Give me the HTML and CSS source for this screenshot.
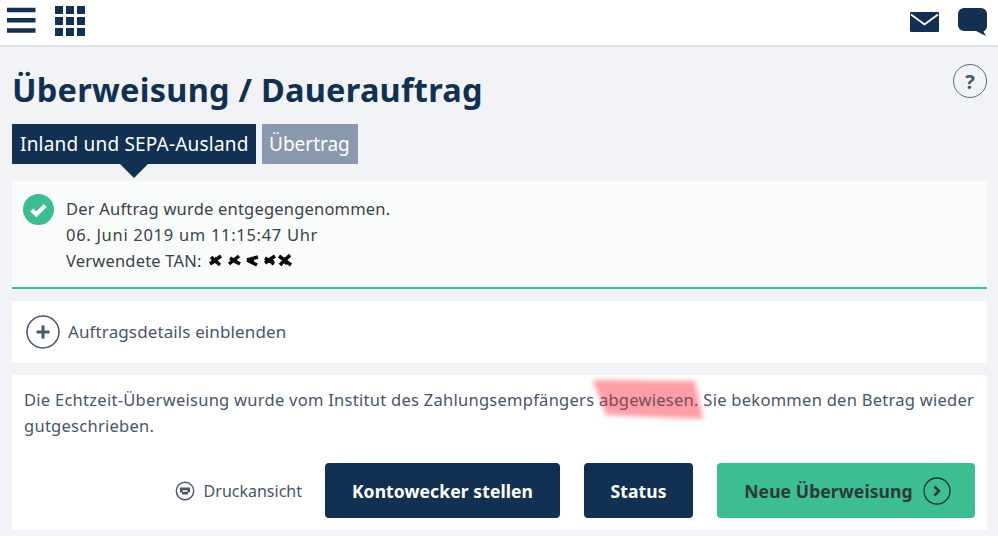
FILE: index.html
```html
<!DOCTYPE html>
<html lang="de">
<head>
<meta charset="utf-8">
<title>Überweisung / Dauerauftrag</title>
<link rel="stylesheet" href="styles.css">
</head>
<body>
<header class="topbar">
  <div class="topbar-left">
    <svg class="icon-menu" viewBox="0 0 29 26"><path d="M0 3h28.500M0 13.300h28.500M0 23.500h28.500"/></svg>
    <svg class="icon-grid" viewBox="0 0 30 30"><rect x="0" y="0" width="8" height="8"/><rect x="11" y="0" width="8" height="8"/><rect x="22" y="0" width="8" height="8"/><rect x="0" y="11" width="8" height="8"/><rect x="11" y="11" width="8" height="8"/><rect x="22" y="11" width="8" height="8"/><rect x="0" y="22" width="8" height="8"/><rect x="11" y="22" width="8" height="8"/><rect x="22" y="22" width="8" height="8"/></svg>
  </div>
  <div class="topbar-right">
    <svg class="icon-mail" viewBox="0 0 29 20"><path class="fill" d="M1 0h27a1 1 0 0 1 1 1v18a1 1 0 0 1-1 1H1a1 1 0 0 1-1-1V1a1 1 0 0 1 1-1z"/><path class="flap" d="M1 2.500l13.500 10 13.500-10"/></svg>
    <svg class="icon-chat" viewBox="0 0 31 28"><path class="fill" d="M7 0h17a6 6 0 0 1 6 6v12a6 6 0 0 1-3.500 5.400l2.500 4.600-10-5H7a6 6 0 0 1-6-6V6a6 6 0 0 1 6-6z"/></svg>
  </div>
</header>
<main class="page">
  <div class="title-row">
    <h1>Überweisung / Dauerauftrag</h1>
    <span class="help">?</span>
  </div>
  <nav class="tabs">
    <a class="tab tab-active">Inland und SEPA-Ausland</a>
    <a class="tab tab-muted">Übertrag</a>
  </nav>
  <section class="card card-success">
    <svg class="icon-check" viewBox="0 0 30 30"><circle cx="15" cy="15" r="15"/><path d="M8.500 15.500l4.500 4.300 8.500-8.600"/></svg>
    <div class="success-text">
      <p>Der Auftrag wurde entgegengenommen.</p>
      <p class="date-line">06. Juni 2019 um 11:15:47 Uhr</p>
      <p class="tan-line">Verwendete TAN:
        <svg class="scribble" viewBox="0 0 84 14"><path d="M2 11l11-8M3 4l9 8M4 6l6 4M9 5l-5 5M22 5l10 6M31 3l-10 8M24 7l6 3M39 7l11-3M39 7l10 5M41 7l5 1M57 10l10-7M57 5l9 6M60 8l6 1M72 12l10-10M71 3l12 9M75 5l4 6"/></svg>
      </p>
    </div>
  </section>
  <section class="card card-toggle">
    <svg class="icon-plus" viewBox="0 0 34 34"><circle cx="17" cy="17" r="16"/><path d="M10.500 17h13M17 10.500v13"/></svg>
    <span>Auftragsdetails einblenden</span>
  </section>
  <section class="card card-result">
    <p class="result-text">Die Echtzeit-Überweisung wurde vom Institut des Zahlungsempfängers <mark class="marker"><span class="marker-ink"></span>abgewiesen.</mark> Sie bekommen den Betrag wieder gutgeschrieben.</p>
    <div class="actions">
      <a class="print">
        <svg class="icon-print" viewBox="0 0 20 20"><circle cx="10" cy="10" r="8.700"/><path class="print-body" d="M5 6.500h10v5h-2v2H7v-2H5z"/><path class="print-slot" d="M7.500 10h5"/></svg>
        Druckansicht
      </a>
      <a class="btn btn-wide">Kontowecker stellen</a>
      <a class="btn btn-status">Status</a>
      <a class="btn btn-green">Neue Überweisung
        <svg class="icon-next" viewBox="0 0 28 28"><circle cx="14" cy="14" r="13"/><path d="M11.500 9.500l4.500 4.500-4.500 4.500"/></svg>
      </a>
    </div>
  </section>
</main>
</body>
</html>
```
FILE: styles.css
```css
* { box-sizing: border-box; }
html, body { margin: 0; padding: 0; }
body {
  width: 998px;
  height: 536px;
  overflow: hidden;
  background: #f1f3f6;
  font-family: "Noto Sans", "Open Sans", sans-serif;
  color: #47566a;
}
p { margin: 0; }

.topbar {
  height: 47px;
  background: #fff;
  border-bottom: 2px solid #dfe2ea;
  display: flex;
  justify-content: space-between;
  padding: 5px 10px 0 7px;
}
.topbar-left { display: flex; gap: 19px; align-items: flex-start; }
.topbar-right { display: flex; gap: 18px; align-items: flex-start; padding-top: 3px; }
.icon-menu { width: 29px; height: 26px; margin-top: 2px; }
.icon-menu path { stroke: #123152; stroke-width: 4.500; fill: none; }
.icon-grid { width: 30px; height: 30px; margin-top: 1px; }
.icon-grid rect { fill: #123152; }
.icon-mail { width: 29px; height: 20px; margin-top: 4px; }
.icon-chat { width: 31px; height: 28px; }
.fill { fill: #123152; }
.flap { fill: none; stroke: #fff; stroke-width: 1.800; }

.page { padding: 0 11px 0 12px; }
.title-row { display: flex; justify-content: space-between; height: 77px; padding-top: 18px; }
h1 {
  margin: 0;
  font-size: 32.500px;
  line-height: 50px;
  font-weight: 700;
  color: #123152;
  letter-spacing: 0.25px;
}
.help {
  width: 34px;
  height: 34px;
  margin: -1px 0 0 0;
  border: 1.500px solid #5d6c80;
  border-radius: 50%;
  display: flex;
  align-items: center;
  justify-content: center;
  font-size: 20px;
  font-weight: 700;
  color: #47566a;
}

.tabs { display: flex; gap: 6px; height: 40px; }
.tab {
  height: 40px;
  font-size: 19px;
  line-height: 40px;
  color: #fff;
  letter-spacing: 0.2px;
}
.tab-active { position: relative; width: 244px; padding-left: 8px; background: #123152; }
.tab-active::after {
  content: "";
  position: absolute;
  left: 108px;
  top: 40px;
  border: 14px solid transparent;
  border-top-color: #123152;
  border-bottom: 0;
}
.tab-muted { width: 96px; padding-left: 7px; background: #8a99ad; letter-spacing: 0; }

.card { background: #fff; }
.card-success {
  margin-top: 17px;
  height: 108px;
  padding: 13px 0 0 11px;
  display: flex;
  gap: 12px;
  background: #fafcfc;
  border-bottom: 2px solid #3dbd92;
}
.icon-check { width: 31px; height: 31px; flex: none; }
.icon-check circle { fill: #3dbd92; }
.icon-check path { fill: none; stroke: #fff; stroke-width: 4; }
.success-text { font-size: 16.500px; line-height: 26px; color: #3b4249; padding-top: 2px; letter-spacing: 0.2px; }
.date-line { letter-spacing: 0.7px; }
.tan-line { display: flex; align-items: center; gap: 6px; }
.scribble { width: 84px; height: 14px; margin-top: -3px; }
.scribble path { fill: none; stroke: #0b0b0b; stroke-width: 3.500; }

.card-toggle {
  margin-top: 12px;
  height: 62px;
  padding: 0 0 2px 14px;
  display: flex;
  align-items: center;
  gap: 8px;
  font-size: 17px;
  letter-spacing: 0.12px;
}
.icon-plus { width: 34px; height: 34px; margin-top: 2px; }
.icon-plus circle { fill: none; stroke: #47566a; stroke-width: 1.500; }
.icon-plus path { fill: none; stroke: #47566a; stroke-width: 3; }

.card-result { position: relative; z-index: 0; margin-top: 12px; height: 155px; padding: 12px 12px 0; }
.result-text { font-size: 16.500px; line-height: 26px; letter-spacing: 0.27px; }
.marker {
  position: relative;
  background: none;
  color: #7d4b5f;
}
.marker-ink {
  position: absolute;
  left: -8px;
  top: -10px;
  width: 115px;
  height: 44px;
  filter: blur(2.500px);
  z-index: -1;
}
.marker-ink::before {
  content: "";
  position: absolute;
  inset: 0;
  background: #fd9da5;
  clip-path: polygon(2px 2px, 104px 3px, 112px 41px, 15px 37px);
}
.actions {
  display: flex;
  align-items: center;
  justify-content: flex-end;
  margin-top: 24px;
  font-size: 16px;
}
.print { display: flex; align-items: center; gap: 9px; margin-right: 23px; }
.icon-print { width: 20px; height: 20px; }
.icon-print circle { fill: none; stroke: #47566a; stroke-width: 1.400; }
.print-body { fill: #47566a; }
.print-slot { stroke: #fff; stroke-width: 1.500; }
.btn {
  flex: none;
  height: 55px;
  border-radius: 4px;
  display: flex;
  align-items: center;
  justify-content: center;
  font-size: 17.500px;
  font-weight: 700;
  color: #fff;
  background: #123152;
  letter-spacing: 0.1px;
}
.btn-wide { width: 235px; }
.btn-status { width: 109px; margin-left: 24px; }
.btn-green {
  width: 258px;
  margin-left: 24px;
  padding-left: 3px;
  gap: 10px;
  background: #3dbd92;
  color: #2a3a3a;
}
.icon-next { width: 28px; height: 28px; }
.icon-next circle { fill: none; stroke: #22333a; stroke-width: 1.300; }
.icon-next path { fill: none; stroke: #22333a; stroke-width: 2.500; }
```
